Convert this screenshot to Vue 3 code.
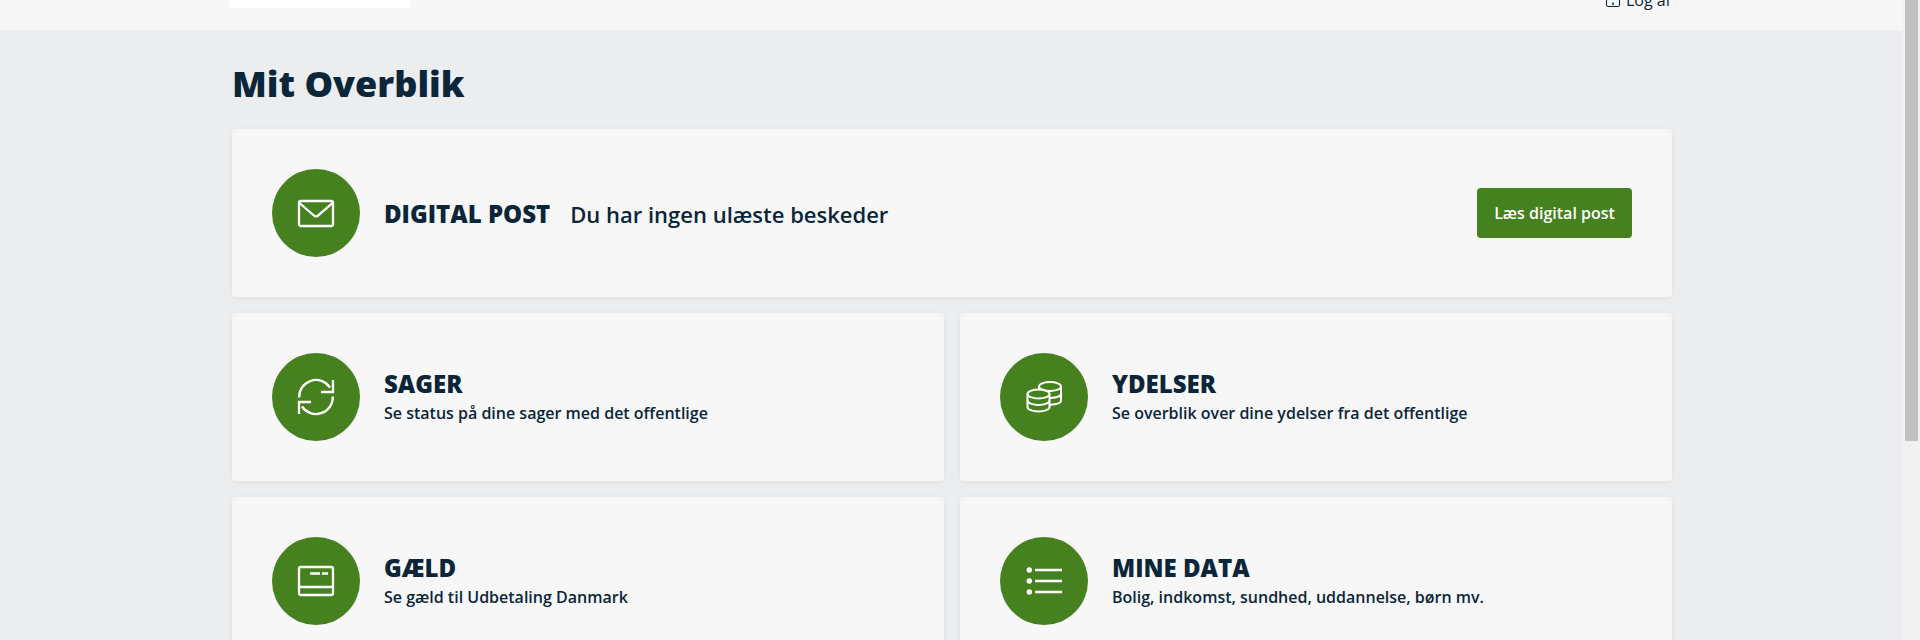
<script setup>
const cards = [
  { id: 'sager', title: 'SAGER', text: 'Se status på dine sager med det offentlige' },
  { id: 'ydelser', title: 'YDELSER', text: 'Se overblik over dine ydelser fra det offentlige' },
  { id: 'gaeld', title: 'GÆLD', text: 'Se gæld til Udbetaling Danmark' },
  { id: 'data', title: 'MINE DATA', text: 'Bolig, indkomst, sundhed, uddannelse, børn mv.' }
]
</script>

<template>
  <div class="page">
    <div class="content">
      <header class="topbar">
        <div class="topbar-inner">
          <div class="logo"></div>
          <a class="logout">
            <svg class="logout-icon" viewBox="0 0 14 14" fill="none" stroke="#0b2639" stroke-width="1">
              <rect x="0.500" y="0.500" width="13" height="13" rx="1.500" />
              <path d="M7 9.500v2.500" stroke-width="1.500" />
            </svg>
            <span>Log af</span>
          </a>
        </div>
      </header>
      <main class="main">
        <h1 class="heading">Mit Overblik</h1>
        <section class="card card-wide">
          <div class="circle">
            <svg viewBox="0 0 40 40" class="icon" fill="none" stroke="#fff" stroke-width="2.300" stroke-linecap="round" stroke-linejoin="round">
              <rect x="3" y="8" width="34" height="25" rx="2" />
              <path d="M3.500 10l14.300 12.500a3.400 3.400 0 0 0 4.400 0L36.500 10" />
            </svg>
          </div>
          <div class="wide-text">
            <span class="wide-title">DIGITAL POST</span>
            <span class="wide-desc">Du har ingen ulæste beskeder</span>
          </div>
          <button class="btn">Læs digital post</button>
        </section>
        <div class="grid">
          <section v-for="c in cards" :key="c.id" class="card">
            <div class="circle">
              <svg v-if="c.id === 'sager'" viewBox="0 0 40 40" class="icon" fill="none" stroke="#fff" stroke-width="2.300">
                <path d="M3.200 20.500A16.800 16.800 0 0 1 34 10.500" />
                <path d="M37 3V15H25" />
                <path d="M36.800 19.500A16.800 16.800 0 0 1 6 29.500" />
                <path d="M3 37V25H15" />
              </svg>
              <svg v-else-if="c.id === 'ydelser'" viewBox="0 0 40 40" class="icon" fill="none" stroke="#fff" stroke-width="2">
                <ellipse cx="14.500" cy="17" rx="11" ry="4.500" />
                <path d="M3.500 17v13c0 2.500 5 4.500 11 4.500s11-2 11-4.500V17" />
                <path d="M3.500 23.500c0 2.500 5 4.500 11 4.500s11-2 11-4.500" />
                <path d="M15 11.500V9.500C15 7 20 5 26 5s11 2 11 4.500v14c0 2-3.500 3.800-11 4.300" />
                <path d="M15 9.500c0 2.500 5 4.500 11 4.500s11-2 11-4.500" />
                <path d="M26 21c6.500-.2 11-2 11-4" />
              </svg>
              <svg v-else-if="c.id === 'gaeld'" viewBox="0 0 40 40" class="icon" fill="none" stroke="#fff" stroke-width="2.300">
                <rect x="3" y="6" width="34" height="28" rx="2" />
                <path d="M3 26h34" />
                <path d="M14 12.500h10M26 12.500h6" />
              </svg>
              <svg v-else viewBox="0 0 40 40" class="icon" fill="none" stroke="#fff" stroke-width="2.300">
                <path d="M11 9h27M11 20h27M11 31h27" />
                <circle cx="5.300" cy="9" r="2.700" fill="#fff" stroke="none" />
                <circle cx="5.300" cy="20" r="2.700" fill="#fff" stroke="none" />
                <circle cx="5.300" cy="31" r="2.700" fill="#fff" stroke="none" />
              </svg>
            </div>
            <div class="card-text">
              <h2 class="card-title">{{ c.title }}</h2>
              <p class="card-desc">{{ c.text }}</p>
            </div>
          </section>
        </div>
      </main>
    </div>
    <div class="scrollbar"><div class="thumb"></div></div>
  </div>
</template>

<style>
html, body { margin: 0; overflow: hidden; }
</style>

<style scoped>
.page {
  display: flex;
  width: 1920px;
  height: 640px;
  overflow: hidden;
  background: #ecedef;
  font-family: "Open Sans", "Noto Sans", sans-serif;
  color: #0b2639;
}
.content { flex: 1; min-width: 0; }
.topbar { height: 30px; background: #f7f7f7; overflow: hidden; }
.topbar-inner {
  width: 1440px;
  margin-left: 229px;
  height: 8px;
  display: flex;
  justify-content: space-between;
}
.logo { width: 181px; height: 8px; background: #fff; }
.logout {
  display: flex;
  align-items: center;
  gap: 6px;
  height: 16px;
  margin-top: -8px;
  margin-right: -2px;
  font-size: 16px;
  line-height: 8px;
}
.logout-icon { width: 14px; height: 14px; }
.main { width: 1440px; margin-left: 232px; }
.heading {
  margin: 0;
  padding-top: 29px;
  height: 70px;
  font-size: 36px;
  line-height: 50px;
  font-weight: 800;
}
.card {
  display: flex;
  align-items: center;
  height: 168px;
  padding: 0 40px;
  box-sizing: border-box;
  background: #f7f7f7;
  border-radius: 4px;
  box-shadow: 0 1px 6px rgba(0, 0, 0, 0.06);
}
.card-wide { margin-bottom: 16px; }
.circle {
  width: 88px;
  height: 88px;
  flex: none;
  border-radius: 50%;
  background: #46811f;
  display: flex;
  align-items: center;
  justify-content: center;
}
.icon { width: 40px; height: 40px; }
.wide-text { flex: 1; margin-left: 24px; display: flex; align-items: baseline; }
.wide-title { font-size: 24px; font-weight: 800; }
.wide-desc { font-size: 22px; font-weight: 600; margin-left: 20px; }
.btn {
  width: 155px;
  height: 50px;
  border: 0;
  border-radius: 4px;
  background: #46811f;
  color: #fff;
  font: 600 16px "Open Sans", sans-serif;
}
.grid {
  display: grid;
  grid-template-columns: 712px 712px;
  gap: 16px;
}
.card-text { margin-left: 24px; padding-bottom: 3px; }
.card-title {
  margin: 0;
  font-size: 24px;
  line-height: 34px;
  font-weight: 800;
}
.card-desc {
  margin: 0;
  font-size: 16px;
  line-height: 24px;
  font-weight: 600;
}
.scrollbar { width: 17px; flex: none; background: #f1f1f1; }
.thumb { width: 13px; height: 441px; margin-left: 2px; background: #c1c1c1; }
</style>
